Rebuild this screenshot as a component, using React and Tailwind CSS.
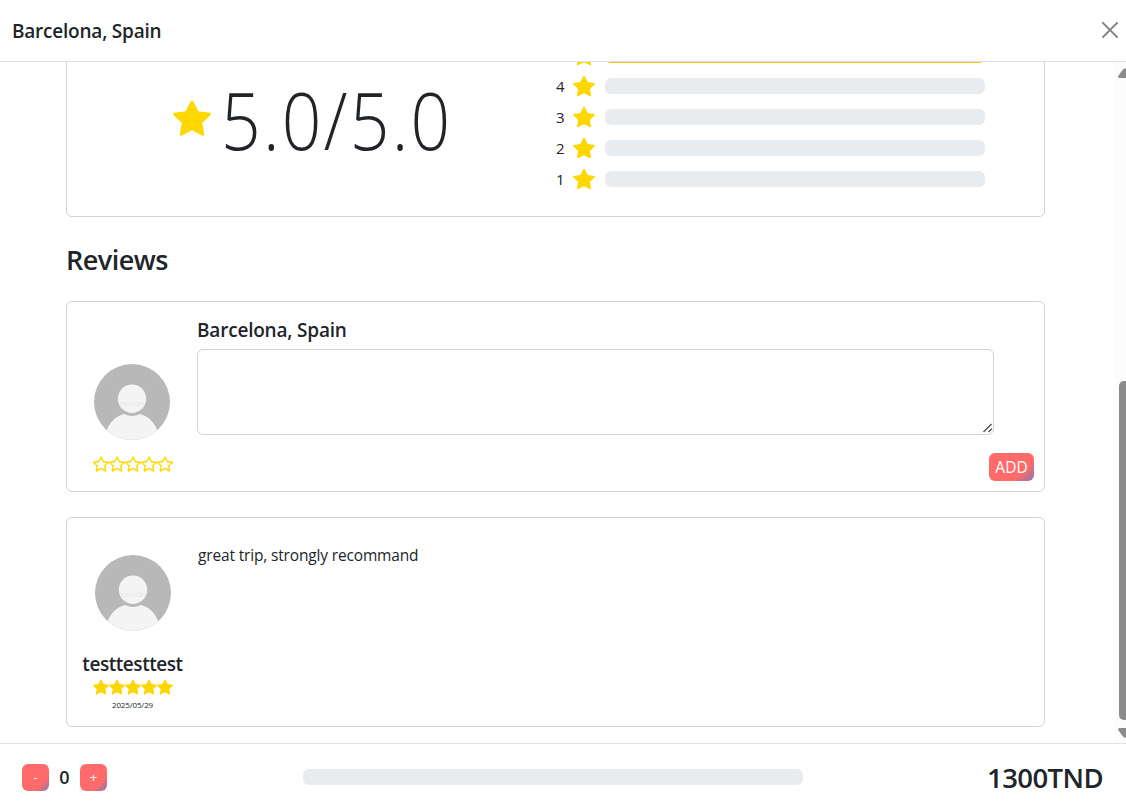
import { BsStar, BsStarFill } from "react-icons/bs";

const gradient = "bg-[linear-gradient(135deg,#ff6b6b_72%,#8a74b0)]";

function Avatar() {
  return (
    <svg className="block size-[76px] rounded-full" viewBox="0 0 76 76">
      <rect width="76" height="76" fill="#b8b8b8" />
      <path d="M12.5 67C16 57.500 22 52 30 50Q38 54 46 50C54 52 60 57.500 63.500 67V76H12.500Z" fill="#f4f4f4" />
      <circle cx="38" cy="34.700" r="14.200" fill="#f4f4f4" />
      <text x="38" y="41.500" textAnchor="middle" fontSize="7" fontWeight="700" fill="#999" opacity="0.08" textLength="37" fontFamily="Open Sans, sans-serif">dreamstime</text>
    </svg>
  );
}

function RatingRow({ value, filled }) {
  return (
    <div className="flex h-6 items-center">
      <span className="mb-0.5 w-[18px] pl-px text-[15px] tracking-[-0.2px]">{value}</span>
      <BsStarFill className="mb-0.5 size-[22px] shrink-0 text-[#ffd700]" />
      <div className="mb-0.5 ml-[10px] h-4 w-[380px] overflow-hidden rounded-md bg-[#e9ecef]">
        {filled && <div className="h-full w-full bg-[#ffc107]" />}
      </div>
    </div>
  );
}

function Stars({ outline }) {
  const Icon = outline ? BsStar : BsStarFill;
  return (
    <div className="flex text-[#ffd700]">
      {[1, 2, 3, 4, 5].map((n) => (
        <Icon key={n} className={outline ? "size-4 overflow-visible stroke-[#ffd700] [stroke-width:0.4px]" : "size-4"} />
      ))}
    </div>
  );
}

export default function App() {
  return (
    <div className="flex h-[805px] w-[1126px] flex-col overflow-hidden bg-white font-['Open_Sans','Noto_Sans',sans-serif] text-[#212529]">
      <header className="flex h-[62px] shrink-0 items-center justify-between border-b border-[#dee2e6] pr-2 pl-3">
        <h1 className="text-[19px] leading-[30px] font-semibold tracking-[-0.22px]">Barcelona, Spain</h1>
        <button className="mb-0.5 text-[#7f7f7f]" aria-label="Close">
          <svg className="size-4" viewBox="0 0 16 16" fill="none" stroke="currentColor" strokeWidth="1.900" strokeLinecap="round">
            <path d="M0.900 0.900L15.100 15.100M15.100 0.900L0.900 15.100" />
          </svg>
        </button>
      </header>

      <div className="flex h-[681px] shrink-0 overflow-hidden">
        <main className="flex w-[1115px] flex-col pl-[66px]">
          <section className="-mt-[31px] flex h-[186px] w-[979px] shrink-0 rounded-md border border-[#d0d2d4]">
            <div className="flex w-[488px] items-start pt-[48px] pl-[106px]">
              <BsStarFill className="mt-[19px] size-[38px] shrink-0 text-[#ffd700]" />
              <span className="ml-[10px] origin-left scale-x-[0.88] text-[79px] leading-[80px] font-light tracking-[2.600px]">5.0/5.0</span>
            </div>
            <div className="flex flex-col gap-[7px] pt-3">
              <RatingRow filled />
              <RatingRow value="4" />
              <RatingRow value="3" />
              <RatingRow value="2" />
              <RatingRow value="1" />
            </div>
          </section>

          <h2 className="mt-[26px] mb-6 text-[27px] leading-[34px] font-semibold tracking-[-0.500px]">Reviews</h2>

          <section className="flex h-[191px] w-[979px] shrink-0 rounded-md border border-[#d0d2d4]">
            <div className="flex w-[130px] flex-col items-center pt-[62px]">
              <Avatar />
              <div className="mt-4 pl-px">
                <Stars outline />
              </div>
            </div>
            <div className="flex flex-1 flex-col">
              <h3 className="mt-4 mb-[7px] text-[19px] leading-6 font-semibold tracking-[-0.200px]">Barcelona, Spain</h3>
              <div className="relative h-[86px] w-[797px] shrink-0">
                <textarea className="block h-full w-full resize-none rounded-md border border-[#ced4da] bg-white px-3 py-1.5 outline-none" />
                <svg className="pointer-events-none absolute right-px bottom-[2px] size-[10px]" viewBox="0 0 10 10" fill="none" stroke="#505050" strokeWidth="1.400">
                  <path d="M0.500 9L8.500 1M5.500 9L8.800 5.700" />
                </svg>
              </div>
              <button className={`mt-[18px] mr-[10px] h-7 w-[45px] shrink-0 self-end rounded-md text-[15.5px] leading-7 tracking-[0px] text-white ${gradient}`}>ADD</button>
            </div>
          </section>

          <section className="mt-[25px] flex h-[210px] w-[979px] shrink-0 rounded-md border border-[#d0d2d4]">
            <div className="flex w-[131px] flex-col items-center pt-[37px]">
              <Avatar />
              <h3 className="mt-[21px] text-[19px] leading-6 font-semibold tracking-[-0.450px]">testtesttest</h3>
              <div className="mt-[3px]">
                <Stars />
              </div>
              <span className="mt-1 text-[8px] leading-3 tracking-[-0.150px]">2025/05/29</span>
            </div>
            <p className="mt-[25px] text-[15.500px] leading-6 tracking-[-0.160px]">great trip, strongly recommand</p>
          </section>
        </main>

        <aside className="flex w-[11px] flex-col items-start bg-[#fcfcfc] pl-[3px]">
          <svg className="mt-[6px] h-[10px] w-2 shrink-0" viewBox="0 0 8 10" fill="#8b8b8b">
            <path d="M0 8.500Q0 10 1.500 10H8V0.500Q6 0 5 1.500L0.500 7.500Z" />
          </svg>
          <div className="mt-[303px] ml-px h-[339px] w-[7px] shrink-0 rounded-l-[5px] bg-[#8b8b8b]" />
          <svg className="mt-2 h-[10px] w-2 shrink-0" viewBox="0 0 8 10" fill="#8b8b8b">
            <path d="M0 1.500Q0 0 1.500 0H8V9.500Q6 10 5 8.500L0.500 2.500Z" />
          </svg>
        </aside>
      </div>

      <footer className="flex h-[62px] shrink-0 items-center border-t border-[#dee2e6] pt-[6px] pr-[23px] pl-[22px]">
        <button className={`size-[27px] rounded-md text-[13px] leading-[27px] text-white ${gradient}`}>-</button>
        <span className="w-[31px] text-center text-[18px] font-semibold">0</span>
        <button className={`size-[27px] rounded-md text-[13px] leading-[27px] text-white ${gradient}`}>+</button>
        <div className="mb-px ml-[196px] h-4 w-[500px] rounded-md bg-[#e9ecef]" />
        <span className="ml-auto text-[27.5px] leading-[34px] font-semibold tracking-[-0.600px]">1300TND</span>
      </footer>
    </div>
  );
}
